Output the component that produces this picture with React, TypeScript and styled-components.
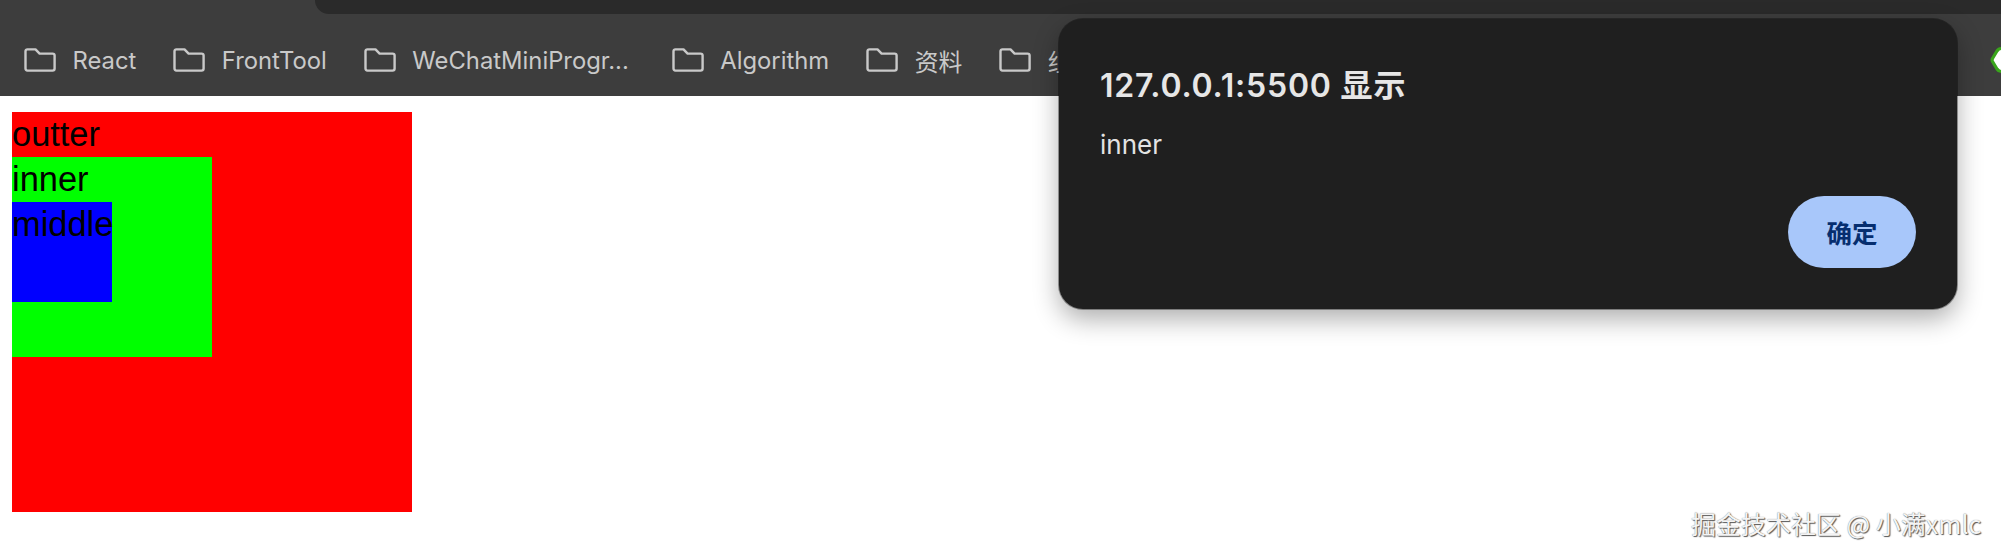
import React from "react";
import styled, { createGlobalStyle } from "styled-components";

const Global = createGlobalStyle`
  html, body { margin: 0; padding: 0; background: #fff; }
  body { font-family: "Liberation Sans", "Noto Sans CJK SC", sans-serif; }
  * { box-sizing: border-box; }
`;

const Page = styled.div`
  position: relative;
  width: 2001px;
  height: 555px;
  overflow: hidden;
  background: #fff;
`;

const Chrome = styled.header`
  height: 96px;
  background: #3d3d3d;
  display: flex;
  flex-direction: column;
`;

const TopStrip = styled.div`
  height: 14px;
  padding-left: 315px;
  display: flex;
`;

const Omnibox = styled.div`
  flex: 1;
  background: #2a2a2a;
  border-bottom-left-radius: 16px;
`;

const BookmarkRow = styled.nav`
  flex: 1;
  display: flex;
  align-items: center;
  padding: 10px 0 0 24px;
  overflow: hidden;
`;

const Bookmark = styled.div<{ $gap: number }>`
  display: flex;
  align-items: center;
  gap: 16.5px;
  margin-right: ${(p) => p.$gap}px;
  flex: none;
  color: #c9c9c9;
  font: 400 23.8px "Inter", "Noto Sans CJK SC", sans-serif;
  white-space: nowrap;
`;

const Extension = styled.svg`
  margin-left: auto;
  margin-right: -24px;
  flex: none;
`;

const Content = styled.main`
  padding: 16px 12px;
`;

const Box = styled.div<{ $size: number; $bg: string }>`
  width: ${(p) => p.$size}px;
  height: ${(p) => p.$size}px;
  background: ${(p) => p.$bg};
  color: #000;
  font: 400 34.4px/45px "Liberation Sans", sans-serif;
`;

const Dialog = styled.section`
  position: absolute;
  left: 1059px;
  top: 19px;
  width: 898px;
  height: 290px;
  padding: 44px 41px 41px;
  display: flex;
  flex-direction: column;
  background: #1f1f1f;
  border-radius: 24px;
  box-shadow: 0 0 0 1px rgba(0, 0, 0, 0.35), 0 10px 26px rgba(0, 0, 0, 0.32);
`;

const Title = styled.h2`
  margin: 1px 0 0;
  color: #e6e6e6;
  font: 600 32px/44px "Inter", "Noto Sans CJK SC", sans-serif;
  letter-spacing: 0.8px;
`;

const Message = styled.p`
  margin: 19px 0 0;
  color: #e3e3e3;
  font: 400 26px/36px "Inter", "Noto Sans CJK SC", sans-serif;
`;

const Footer = styled.div`
  margin-top: auto;
  display: flex;
  justify-content: flex-end;
`;

const OkButton = styled.button`
  width: 128px;
  height: 72px;
  padding: 0 0 2px;
  border: 0;
  border-radius: 36px;
  background: #a8c7fa;
  color: #062e6f;
  font: 700 25.5px "Noto Sans CJK SC", sans-serif;
`;

const Watermark = styled.div`
  position: absolute;
  left: 1691px;
  top: 506px;
  color: #f4f4f4;
  font: 400 25px/34px "Noto Sans CJK SC", sans-serif;
  white-space: nowrap;
  text-shadow: 1px 1px 1px #555, 0 0 1px #777;
`;

const FolderIcon = () => (
  <svg width="32" height="24" viewBox="0 0 32 24" fill="none" stroke="#c9c9c9" strokeWidth="2.4" strokeLinejoin="round">
    <path d="M1.5 3.2C1.5 2 2.2 1.4 3.4 1.4H11.5L15.6 5.6H28.6C29.8 5.6 30.6 6.4 30.6 7.6V20.6C30.6 21.8 29.8 22.6 28.6 22.6H3.4C2.2 22.6 1.5 21.8 1.5 20.6Z" />
  </svg>
);

const bookmarks: { name: string; gap: number }[] = [
  { name: "React", gap: 37 },
  { name: "FrontTool", gap: 37 },
  { name: "WeChatMiniProgr...", gap: 43 },
  { name: "Algorithm", gap: 37 },
  { name: "资料", gap: 37 },
  { name: "组件", gap: 37 },
];

export default function App() {
  return (
    <Page>
      <Global />
      <Chrome>
        <TopStrip>
          <Omnibox />
        </TopStrip>
        <BookmarkRow>
          {bookmarks.map((b) => (
            <Bookmark key={b.name} $gap={b.gap}>
              <FolderIcon />
              <span>{b.name}</span>
            </Bookmark>
          ))}
          <Extension width="35" height="28" viewBox="0 0 35 28">
            <path d="M11 2.5H26L33 14L26 25.5H11C9 25.5 8 24.5 7 23L2.5 15.5C2 14.5 2 13.5 2.5 12.5L7 5C8 3.5 9 2.5 11 2.5Z" fill="#fff" stroke="#3aa51c" strokeWidth="3.2" strokeLinejoin="round" />
          </Extension>
        </BookmarkRow>
      </Chrome>
      <Content>
        <Box $size={400} $bg="#ff0000">
          outter
          <Box $size={200} $bg="#00ff00">
            inner
            <Box $size={100} $bg="#0000ff">
              middle
            </Box>
          </Box>
        </Box>
      </Content>
      <Dialog>
        <Title>127.0.0.1:5500 显示</Title>
        <Message>inner</Message>
        <Footer>
          <OkButton>确定</OkButton>
        </Footer>
      </Dialog>
      <Watermark>掘金技术社区 @ 小满xmlc</Watermark>
    </Page>
  );
}
